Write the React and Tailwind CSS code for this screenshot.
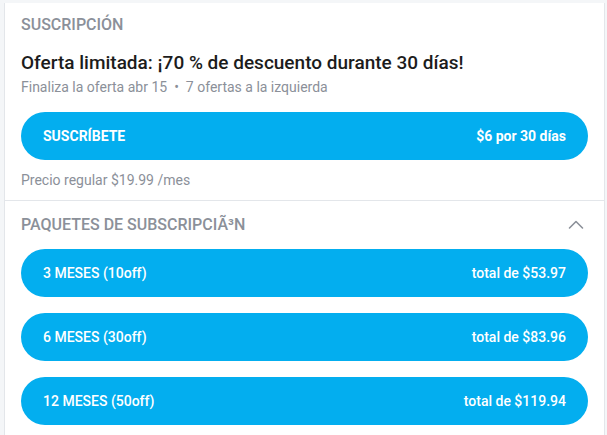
import React from "react";

const packages = [
  { label: "3 MESES (10off)", total: "total de $53.97" },
  { label: "6 MESES (30off)", total: "total de $83.96" },
  { label: "12 MESES (50off)", total: "total de $119.94" },
];

const App = () => {
  return (
    <div
      className="min-h-screen bg-[#f4f6f8] pt-[3px] pl-[4px]"
      style={{ fontFamily: "Roboto, 'Noto Sans', sans-serif" }}
    >
      <div className="w-[601px] min-h-[432px] bg-white border-x border-[#e3e6ea]">
        {/* ===== SUSCRIPCION ===== */}
        <div className="px-4 pt-3 pb-[11px] border-b border-[#e3e6ea]">
          <div className="text-[16px] leading-5 font-medium text-[#8b9099]">
            SUSCRIPCIÓN
          </div>
          <h2 className="mt-4 text-[19px] leading-6 font-medium text-[#1c1c1c]">
            Oferta limitada: ¡70 % de descuento durante 30 días!
          </h2>
          <div className="mt-[3px] text-[14px] leading-[18px] text-[#8b9099]">
            Finaliza la oferta abr 15
            <span className="mx-[7px]">•</span>7 ofertas a la izquierda
          </div>
          <button className="mt-4 w-full h-12 px-[22px] flex items-center justify-between rounded-full bg-[#03aeef] text-white text-[14px] font-bold">
            <span>SUSCRÍBETE</span>
            <span>$6 por 30 días</span>
          </button>
          <div className="mt-[11px] text-[14px] leading-[18px] text-[#8b9099]">
            Precio regular $19.99 /mes
          </div>
        </div>

        {/* ===== PAQUETES ===== */}
        <div className="px-4 pt-[14px]">
          <div className="flex items-center justify-between h-5">
            <span className="text-[16px] leading-5 font-medium text-[#8b9099]">
              PAQUETES DE SUBSCRIPCIÃ³N
            </span>
            <svg
              width="24"
              height="24"
              viewBox="0 0 24 24"
              fill="none"
              stroke="#8b9099"
              strokeWidth="1.6"
              strokeLinecap="round"
              strokeLinejoin="round"
            >
              <polyline points="5.5 15 12 8.5 18.5 15" />
            </svg>
          </div>
          <div className="mt-[14px] flex flex-col gap-4">
            {packages.map((p) => (
              <button
                key={p.label}
                className="w-full h-12 px-[22px] flex items-center justify-between rounded-full bg-[#03aeef] text-white text-[14px] font-medium"
              >
                <span>{p.label}</span>
                <span>{p.total}</span>
              </button>
            ))}
          </div>
        </div>
      </div>
    </div>
  );
};

export default App;
